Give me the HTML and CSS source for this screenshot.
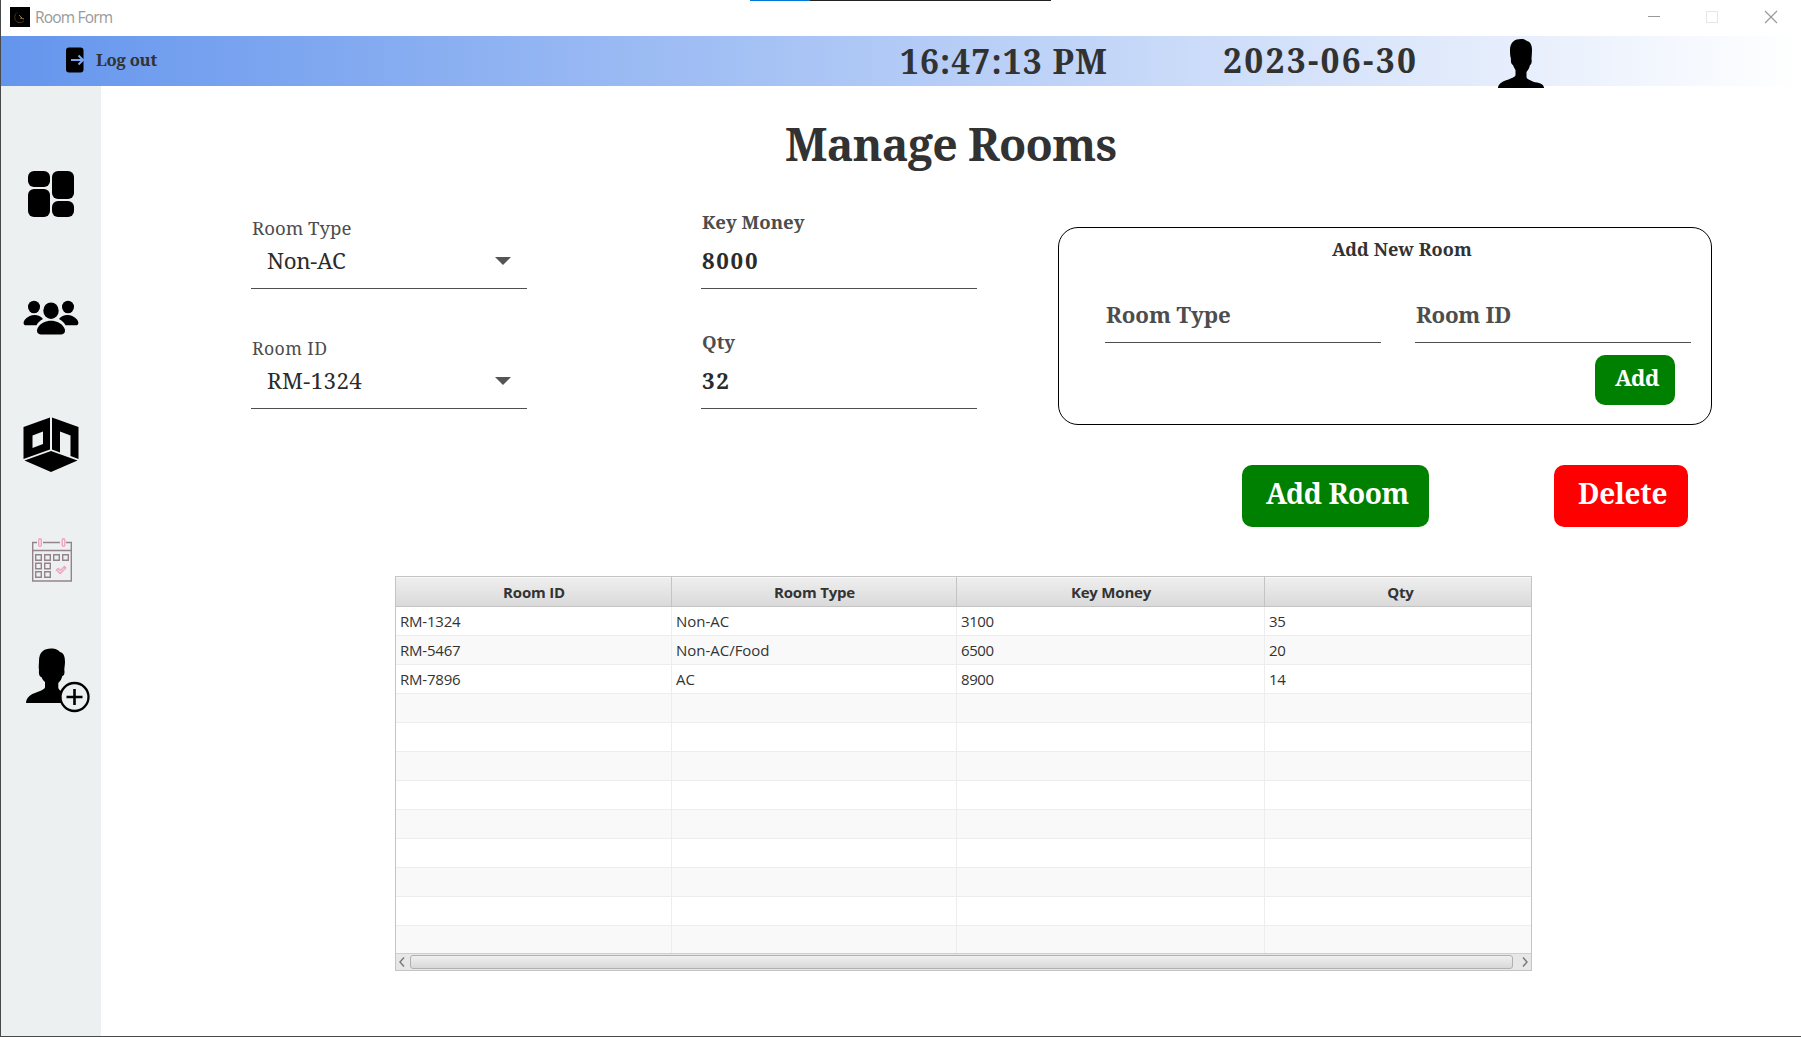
FILE: index.html
```
<!DOCTYPE html>
<html lang="en">
<head>
<meta charset="utf-8">
<title>Room Form</title>
<link rel="stylesheet" href="styles.css">
</head>
<body>
<div class="window">
  <div class="progress"></div>
  <header class="titlebar">
    <svg class="app-icon" width="20" height="20" viewBox="0 0 20 20"><rect width="20" height="20"/><path d="M7 5.500A6 6 0 0 0 8 15.500Q11 16.500 14 14" fill="none" stroke="#4b3410"/><path d="M9 8l3 3M10 11l4 1" stroke="#8a7640"/></svg>
    <span class="window-title">Room Form</span>
    <svg class="controls" width="130" height="14" viewBox="0 0 130 14" fill="none"><path d="M0 6.500h12" stroke="#999"/><rect x="58.500" y="1.500" width="11" height="11" stroke="#e6e6e6"/><path d="M117 1l12 12M129 1l-12 12" stroke="#999" stroke-width="1.200"/></svg>
  </header>
  <nav class="topbar">
    <svg class="logout-icon" width="18" height="26" viewBox="0 0 18 26"><rect x="0" y="0.500" width="17.500" height="25" rx="3"/><path d="M5 13H17M12.500 8.500l4.500 4.500-4.500 4.500" fill="none" stroke="#7ba4f2" stroke-width="2"/></svg>
    <span class="logout">Log out</span>
    <span class="time">16:47:13 PM</span>
    <span class="date">2023-06-30</span>
    <svg class="avatar" width="46" height="49" viewBox="0 0 46 49"><path d="M12 11C12 3 17 0 23 0c3 0 5 1 6 2 4 1 5 5 5 9 0 3-.3 6-.5 9 .7 3-.3 6-1.500 6-.5 3-2 5-3.500 7v5c0 2 4 3.500 8.500 5.300C43 44 46 46 46 49H0c0-3 3-6 8-7.700C13 39.500 17.500 38 17.500 36v-5c-1-2-2-3-2.500-5-1.500 0-2.500-3-2-6-1-3-1-6-1-9z"/></svg>
  </nav>
  <div class="body">
    <aside class="sidebar">
      <svg class="nav-dash" width="46" height="46" viewBox="0 0 46 46"><rect width="22" height="16" rx="6"/><rect x="24" width="22" height="28" rx="6"/><rect y="18" width="22" height="28" rx="6"/><rect x="24" y="30" width="22" height="16" rx="6"/></svg>
      <svg class="nav-people" width="56" height="36" viewBox="0 0 56 36"><ellipse cx="11" cy="7" rx="6" ry="6.300"/><ellipse cx="45" cy="7" rx="6" ry="6.300"/><ellipse cx="28" cy="10.700" rx="7.700" ry="8.300"/><path d="M3 25.300C0 25.300 0 22 2 19.500 6 14 16 13 20 19c-3 1.500-5 3.500-6.500 6.300zM53 25.300c3 0 3-3.300 1-5.800C50 14 40 13 36 19c3 1.500 5 3.500 6.500 6.300z"/><path d="M18 34.500c-4 0-5-4-3-7 5-9 21-9 26 0 2 3 1 7-3 7z"/></svg>
      <svg class="nav-rooms" width="56" height="56" viewBox="0 0 56 56"><path fill-rule="evenodd" d="M.500 10L27 .500V32.500L.500 42zM9.500 18.500V31L20 27V14.500zM29 .500L55.500 10V42L47.500 39V18.500L37 14.500V35.500L29 32.500z"/><path d="M1.500 43.500L28 34l26.500 9.500L28 55z"/></svg>
      <svg class="nav-calendar" width="40" height="44" viewBox="0 0 40 44" fill="none" stroke="#94848a" stroke-width="1.400"><path d="M5 4.500H.700V43H39.300V4.500H34M11 4.500H28M.700 12.500H39.300"/><path d="M3.700 16.700h5.600v5.600H3.700zM12.700 16.700h5.600v5.600h-5.600zM21.700 16.700h5.600v5.600h-5.600zM30.700 16.700h5.600v5.600h-5.600zM3.700 25.200h5.600v5.600H3.700zM12.700 25.200h5.600v5.600h-5.600zM3.700 33.700h5.600v5.600H3.700zM12.700 33.700h5.600v5.600h-5.600z"/><path d="M24.500 32l1.800-1.500 2 2 4.200-4 1.300 1.500-5.600 5.500z" stroke="#f3a2bd"/><rect x="6.700" y=".700" width="2.600" height="7.600" rx="1.300" stroke="#f3a2bd"/><rect x="30.200" y=".700" width="2.600" height="7.600" rx="1.300" stroke="#f3a2bd"/></svg>
      <svg class="nav-user" width="65" height="65" viewBox="0 0 65 65"><path d="M13 13C13 4 18 .500 25 .500c5 0 7 1.500 9 3.500 4 1 5 5 5 10 0 3-.6 5-.7 8 .7 3-.3 6-2 6-.6 3-2 5-4 7v5c1 3 5 4 11 7 7 2 10 5 10 8H0c0-4 3-8 9-10 7-2.500 10-4 10-6v-5c-2-2-3-3-3.500-5-2 0-3-3-2.500-7-.6-3 0-6 0-9z"/><circle cx="48.500" cy="49" r="14" fill="#ecf0f1" stroke="#000" stroke-width="2.300"/><path d="M48.500 41v16M40.500 49h16" stroke="#000" stroke-width="2.600"/></svg>
    </aside>
    <main>
      <h1>Manage Rooms</h1>
      <section class="form">
        <div class="fields">
          <div class="field light"><label class="lb-type">Room Type</label><div class="value"><span>Non-AC</span><b class="arrow"></b></div></div>
          <div class="field"><label>Key Money</label><div class="value v-num">8000</div></div>
          <div class="field light"><label class="lb-id">Room ID</label><div class="value v-rm"><span>RM-1324</span><b class="arrow"></b></div></div>
          <div class="field"><label>Qty</label><div class="value v-num">32</div></div>
        </div>
        <div class="panel">
          <h2>Add New Room</h2>
          <div class="inputs"><div class="input">Room Type</div><div class="input in-id">Room ID</div></div>
          <button class="btn small">Add</button>
        </div>
      </section>
      <div class="actions">
        <button class="btn add">Add Room</button>
        <button class="btn del">Delete</button>
      </div>
      <div class="table">
        <div class="row head"><span>Room ID</span><span>Room Type</span><span>Key Money</span><span>Qty</span></div>
        <div class="rows">
          <div class="row"><span>RM-1324</span><span>Non-AC</span><span>3100</span><span>35</span></div>
          <div class="row"><span>RM-5467</span><span>Non-AC/Food</span><span>6500</span><span>20</span></div>
          <div class="row"><span>RM-7896</span><span>AC</span><span>8900</span><span>14</span></div>
          <div class="row"><span></span><span></span><span></span><span></span></div>
          <div class="row"><span></span><span></span><span></span><span></span></div>
          <div class="row"><span></span><span></span><span></span><span></span></div>
          <div class="row"><span></span><span></span><span></span><span></span></div>
          <div class="row"><span></span><span></span><span></span><span></span></div>
          <div class="row"><span></span><span></span><span></span><span></span></div>
          <div class="row"><span></span><span></span><span></span><span></span></div>
          <div class="row"><span></span><span></span><span></span><span></span></div>
          <div class="row"><span></span><span></span><span></span><span></span></div>
        </div>
        <div class="scrollbar">
          <svg width="6" height="10" viewBox="0 0 6 10" fill="none" stroke="#777" stroke-width="1.400"><path d="M5 .500L1 5l4 4.500"/></svg>
          <div class="thumb"></div>
          <svg width="6" height="10" viewBox="0 0 6 10" fill="none" stroke="#777" stroke-width="1.400"><path d="M1 .500L5 5 1 9.500"/></svg>
        </div>
      </div>
    </main>
  </div>
</div>
</body>
</html>
```
FILE: styles.css
```
* { box-sizing: border-box; }
body {
  margin: 0;
  background: #fff;
  color: #323232;
  font-family: "Noto Serif", "DejaVu Serif", serif;
}
.window {
  position: relative;
  width: 1801px;
  height: 1037px;
  border-left: 1px solid #48494b;
  border-bottom: 1px solid #48494b;
  display: flex;
  flex-direction: column;
  overflow: hidden;
}
.progress {
  position: absolute;
  left: 749px;
  top: 0;
  width: 301px;
  height: 1px;
  background: linear-gradient(90deg, #0078d7 60px, #222 60px);
}
.titlebar {
  height: 36px;
  flex: none;
  display: flex;
  align-items: center;
  padding: 0 23px 2px 9px;
}
.window-title {
  margin-left: 5px;
  font: 15.5px/20px "Open Sans", sans-serif;
  letter-spacing: -.8px;
  color: #999;
}
.controls { margin-left: auto; }

.topbar {
  height: 50px;
  flex: none;
  display: flex;
  align-items: center;
  background: linear-gradient(90deg, #6495ed, #fff);
  font-weight: 700;
  white-space: nowrap;
}
.logout-icon { margin: 0 12px 3px 65px; }
.logout { font-size: 16.7px; letter-spacing: -.3px; width: 61px; margin-bottom: 4px; }
.time { font-size: 33.5px; letter-spacing: 1.1px; margin-left: 743px; width: 208px; }
.date { font-size: 33.5px; letter-spacing: 2.3px; margin-left: 115px; width: 196px; margin-bottom: 2px; }
.avatar { margin: 5px 0 0 79px; flex: none; }

.body { flex: 1; display: flex; min-height: 0; }
.sidebar {
  width: 100px;
  flex: none;
  background: #ecf0f1;
  display: flex;
  flex-direction: column;
  align-items: flex-start;
  padding: 85px 0 0 22px;
}
.sidebar svg { flex: none; }
.nav-dash { margin-left: 5px; }
.nav-people { margin-top: 83px; }
.nav-rooms { margin-top: 81px; }
.nav-calendar { margin: 65px 0 0 9px; }
.nav-user { margin: 66px 0 0 3px; }

main { flex: 1; padding-left: 150px; }
h1 {
  margin: 33px 0 0 534px;
  font-size: 44.6px;
  line-height: 50px;
  letter-spacing: -.7px;
  white-space: nowrap;
}
.form { display: flex; margin-top: 44px; gap: 81px; }
.fields {
  display: grid;
  grid-template-columns: 276px 276px;
  column-gap: 174px;
  row-gap: 44px;
  align-content: start;
}
.field {
  height: 76px;
  border-bottom: 1px solid #4f4f4f;
  padding-left: 1px;
  display: flex;
  flex-direction: column;
  font-weight: 700;
}
label {
  font-size: 18.6px;
  line-height: 20px;
  margin-top: -1px;
  color: #4d4d4d;
}
.light { font-weight: 400; padding-top: 6px; }
.lb-id { font-size: 17.7px; letter-spacing: .4px; }
.value {
  font-size: 22.3px;
  line-height: 30px;
  margin-top: auto;
  margin-bottom: 12px;
  color: #2b2b2b;
  display: flex;
  align-items: center;
  justify-content: space-between;
}
.light .value { padding: 0 16px 0 15px; letter-spacing: -.3px; }
.light .v-rm { letter-spacing: .4px; }
.v-num { letter-spacing: 1.7px; }
.arrow {
  border: 8px solid transparent;
  border-top-color: #555;
  border-bottom: 0;
}
.panel {
  width: 654px;
  height: 198px;
  margin-top: 14px;
  border: 1px solid #000;
  border-radius: 20px;
  display: flex;
  flex-direction: column;
  padding: 8px 20px 0 46px;
}
h2 {
  margin: 0 0 0 227px;
  font-size: 18.1px;
  line-height: 26px;
  letter-spacing: .05px;
}
.inputs { display: flex; gap: 34px; }
.input {
  width: 276px;
  flex: none;
  height: 81px;
  padding: 38px 0 0 1px;
  border-bottom: 1px solid #4f4f4f;
  font-size: 22.3px;
  line-height: 30px;
  font-weight: 700;
  letter-spacing: -.1px;
  color: #4d4d4d;
}
.in-id { letter-spacing: -.3px; }
.btn {
  border: 0;
  background: #008000;
  color: #fff;
  font: 700 28px/36px "Noto Serif", "DejaVu Serif", serif;
  letter-spacing: -.44px;
  border-radius: 10px;
  white-space: nowrap;
  text-align: left;
}
.small {
  width: 80px;
  height: 50px;
  flex: none;
  margin: 12px 16px 0 auto;
  font-size: 22.3px;
  padding: 0 0 5px 20px;
}
.actions {
  display: flex;
  gap: 125px;
  margin: 40px 0 0 991px;
}
.actions .btn { height: 62px; padding: 0 0 6px 24px; }
.add { width: 187px; }
.del { width: 134px; background: #f00; }
.actions .del { letter-spacing: -.25px; }

.table {
  width: 1137px;
  height: 395px;
  margin: 49px 0 0 144px;
  border: 1px solid #c4c4c4;
  display: flex;
  flex-direction: column;
  font: 15px/28px "Open Sans", sans-serif;
  color: #333;
}
.row {
  display: grid;
  grid-template-columns: 276px 285px 308px 266px;
  height: 29px;
  flex: none;
}
.row span {
  border-right: 1px solid #ededed;
  border-bottom: 1px solid #ededed;
  padding-left: 4px;
  letter-spacing: -.2px;
}
.rows span:nth-child(2) { letter-spacing: -.02px; }
.rows span:nth-child(n+3) { letter-spacing: -.45px; }
.row span:last-child { border-right: 0; }
.rows .row:nth-child(even) { background: #f9f9f9; }
.rows { flex: 1; overflow: hidden; }
.head {
  height: 30px;
  grid-template-rows: 30px;
  background: linear-gradient(#efefef, #d9d9d9);
  box-shadow: inset 0 1px #f8f8f8;
  font-weight: 700;
  line-height: 31px;
  text-align: center;
}
.head span { border-color: #c4c4c4; padding: 0 0 0 1px; }
.head span:last-child { padding-left: 5px; }
.scrollbar {
  height: 17px;
  flex: none;
  display: flex;
  align-items: center;
  padding: 0 3px;
  border-top: 1px solid #cfcfcf;
  background: #e7e7e7;
}
.thumb {
  width: 1103px;
  height: 14px;
  flex: none;
  margin: 0 9px 0 5px;
  border: 1px solid #b0b0b0;
  border-radius: 3px;
  background: linear-gradient(#f0f0f0, #d8d8d8);
}
```
